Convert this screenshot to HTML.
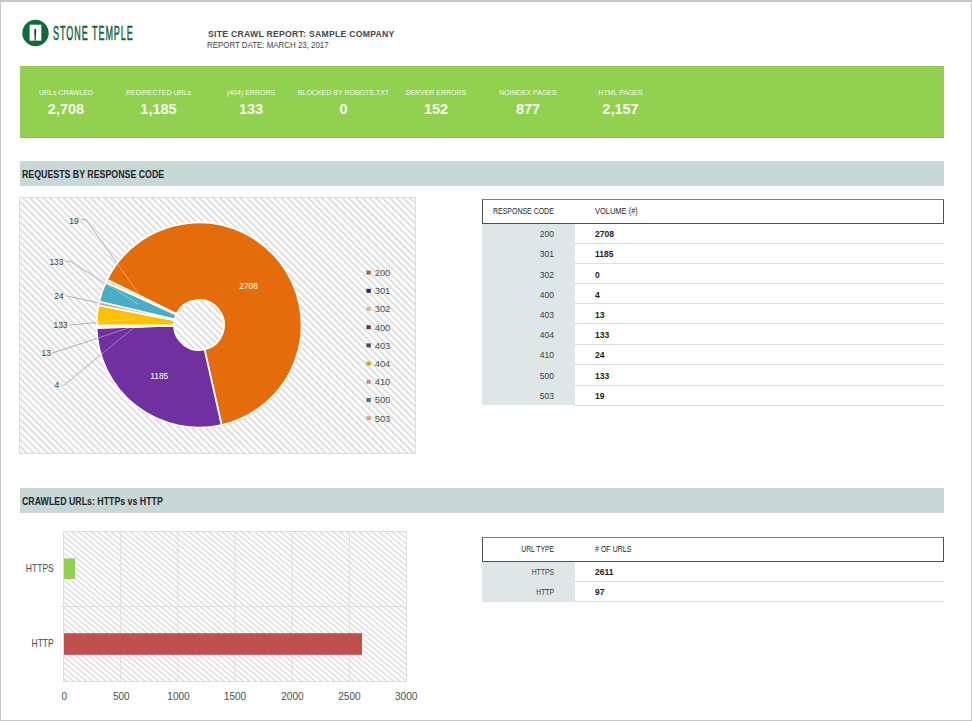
<!DOCTYPE html>
<html><head><meta charset="utf-8">
<style>
*{margin:0;padding:0;box-sizing:border-box}
html,body{width:972px;height:721px;overflow:hidden;background:#fff;font-family:"Liberation Sans",sans-serif}
.abs{position:absolute;white-space:nowrap}
#frame{position:absolute;left:0;top:0;width:972px;height:721px;border-top:2px solid #c6c6c6;border-left:1px solid #c6c6c6;border-right:1px solid #c6c6c6;border-bottom:1px solid #c6c6c6}
.kpi{position:absolute;width:120px;text-align:center;color:#f4fbec}
.kpi .l{font-size:7px;line-height:8px;position:absolute;top:0.5px;left:0;width:120px}
.kpi .v{font-size:14.5px;font-weight:bold;line-height:16px;position:absolute;top:12.8px;left:0;width:120px}
.sec{position:absolute;left:20px;width:924px;height:25px;background:#c8d8d7}
.sec span{position:absolute;left:2px;font-size:10px;font-weight:bold;color:#1e2528;top:9px;line-height:10px;white-space:nowrap;transform-origin:0 0;transform:scaleX(0.88)}
.tb{position:absolute;left:482px;width:462px}
.tbh{position:absolute;left:0;top:0;width:462px;height:25px;border:1.4px solid #505050;border-top-color:#808080;background:#fff}
.cell{position:absolute;font-size:8.5px;color:#3a3a3a;line-height:10px}
.gcol{position:absolute;left:0;width:92.7px;background:#dfe6e8}
.cell.sx{transform-origin:0 0;white-space:nowrap;color:#262626}
.cell.b{font-weight:bold;color:#222}
.rl{position:absolute;left:92px;width:370px;height:1px;background:#dedede}
</style></head><body>
<div id="frame"></div>

<!-- logo -->
<svg class="abs" style="left:0;top:0" width="160" height="60">
  <circle cx="35.5" cy="33" r="13.2" fill="#0d6a3b"/>
  <rect x="29.6" y="24.7" width="11.7" height="16" fill="#fff"/>
  <path d="M34.7 40.7 L34.2 30 Q35.2 27.6 36.2 30 L35.7 40.7 Z" fill="#1d3b2c"/>
</svg>
<div class="abs" id="logotext" style="left:53.3px;top:21.8px;font-size:21px;line-height:21px;color:#17603a;-webkit-text-stroke:0.6px #17603a;transform-origin:0 0;transform:scaleX(0.43);letter-spacing:2.2px">STONE TEMPLE</div>

<div class="abs" style="left:208px;top:28.1px;font-size:9.6px;font-weight:bold;color:#454545;line-height:11px;letter-spacing:0.3px;transform-origin:0 0;transform:scaleX(0.9)">SITE CRAWL REPORT: SAMPLE COMPANY</div>
<div class="abs" style="left:207px;top:40.2px;font-size:9px;color:#444;line-height:10px;transform-origin:0 0;transform:scaleX(0.878)">REPORT DATE: MARCH 23, 2017</div>

<!-- KPI band -->
<div class="abs" style="left:20px;top:65.5px;width:924px;height:72px;background:#92d050;border-top:1px solid #8ccb4c;border-bottom:1px solid #8dbf58"></div>
<div class="kpi" style="left:6px;top:88px"><div class="l">URLs CRAWLED</div><div class="v">2,708</div></div>
<div class="kpi" style="left:98.5px;top:88px"><div class="l">REDIRECTED URLs</div><div class="v">1,185</div></div>
<div class="kpi" style="left:191px;top:88px"><div class="l">(404) ERRORS</div><div class="v">133</div></div>
<div class="kpi" style="left:283.5px;top:88px"><div class="l">BLOCKED BY ROBOTS.TXT</div><div class="v">0</div></div>
<div class="kpi" style="left:376px;top:88px"><div class="l">SERVER ERRORS</div><div class="v">152</div></div>
<div class="kpi" style="left:468px;top:88px"><div class="l">NOINDEX PAGES</div><div class="v">877</div></div>
<div class="kpi" style="left:560.5px;top:88px"><div class="l">HTML PAGES</div><div class="v">2,157</div></div>

<!-- section 1 -->
<div class="sec" style="top:161px"><span>REQUESTS BY RESPONSE CODE</span></div>

<!-- pie chart -->
<svg class="abs" style="left:0;top:0" width="430" height="470">
  <defs>
    <pattern id="stripe" patternUnits="userSpaceOnUse" width="4.8" height="4.8" patternTransform="rotate(-45)">
      <rect width="4.8" height="4.8" fill="#fff"/>
      <rect width="2.2" height="4.8" fill="#e0e0e0"/>
    </pattern>
  </defs>
  <rect x="19.5" y="197.5" width="396" height="256" fill="url(#stripe)" stroke="#dcdcdc" stroke-width="1"/>
  <g stroke="#fff" stroke-width="1.7" stroke-linejoin="round">
    <path fill="#e46c0a" d="M107.03 279.75 A102.5 102.5 0 1 1 221.59 424.98 L204.51 349.39 A25.0 25.0 0 1 0 176.57 313.96 Z"/>
    <path fill="#7030a0" d="M221.59 424.98 A102.5 102.5 0 0 1 96.54 327.89 L174.01 325.71 A25.0 25.0 0 0 0 204.51 349.39 Z"/>
    <path fill="#f2ecec" d="M96.54 327.89 A102.5 102.5 0 0 1 96.53 327.28 L174.01 325.56 A25.0 25.0 0 0 0 174.01 325.71 Z"/>
    <path fill="#eeeaf2" d="M96.53 327.28 A102.5 102.5 0 0 1 96.50 325.30 L174.00 325.07 A25.0 25.0 0 0 0 174.01 325.56 Z"/>
    <path fill="#ffc000" d="M96.50 325.30 A102.5 102.5 0 0 1 98.45 305.12 L174.47 320.15 A25.0 25.0 0 0 0 174.00 325.07 Z"/>
    <path fill="#c0806e" d="M98.45 305.12 A102.5 102.5 0 0 1 99.22 301.54 L174.66 319.28 A25.0 25.0 0 0 0 174.47 320.15 Z"/>
    <path fill="#4bacc6" d="M99.22 301.54 A102.5 102.5 0 0 1 105.79 282.37 L176.27 314.60 A25.0 25.0 0 0 0 174.66 319.28 Z"/>
    <path fill="#f9b97f" d="M105.79 282.37 A102.5 102.5 0 0 1 107.03 279.75 L176.57 313.96 A25.0 25.0 0 0 0 176.27 314.60 Z"/>
  </g>
  <g stroke="#a0a0a0" stroke-width="0.8" fill="none">
    <polyline points="80.8,219.7 86.3,219.7 116.8,263.0"/>
    <polyline points="66.2,261.4 70.4,261.4 104.9,283.1"/>
    <polyline points="66.7,295.8 98.4,302.9"/>
    <polyline points="70.0,325.0 96.0,322.6"/>
    <polyline points="51.7,353.3 96.9,338.4"/>
    <polyline points="63.3,385.8 100.5,355.1"/>
  </g>
  <g stroke="#ffffff" stroke-opacity="0.45" stroke-width="0.8" fill="none">
    <line x1="116.8" y1="263.0" x2="141.2" y2="297.6"/>
    <line x1="104.9" y1="283.1" x2="138.5" y2="304.3"/>
    <line x1="98.4" y1="302.9" x2="136.4" y2="311.5"/>
    <line x1="96.0" y1="322.6" x2="135.3" y2="318.9"/>
    <line x1="96.9" y1="338.4" x2="135.0" y2="325.8"/>
    <line x1="100.5" y1="355.1" x2="135.0" y2="326.6"/>
  </g>
  <g font-family="Liberation Sans" font-size="8.4" fill="#3c3c3c">
    <text x="78.7" y="224" text-anchor="end">19</text>
    <text x="63.4" y="265.2" text-anchor="end">133</text>
    <text x="63.7" y="299.2" text-anchor="end">24</text>
    <text x="67.5" y="328.3" text-anchor="end">133</text>
    <text x="50.8" y="355.8" text-anchor="end">13</text>
    <text x="59.2" y="388" text-anchor="end">4</text>
  </g>
  <g font-family="Liberation Sans" font-size="8.4" fill="#fff" text-anchor="middle">
    <text x="248.6" y="288.5">2708</text>
    <text x="159.2" y="379.2">1185</text>
  </g>
  <g>
    <rect x="366.4" y="270.6" width="4.4" height="4" fill="#b06432"/>
    <rect x="366.4" y="288.8" width="4.4" height="4" fill="#3c1f64"/>
    <rect x="366.4" y="307.0" width="4.4" height="4" fill="#d9b98c"/>
    <rect x="366.4" y="325.2" width="4.4" height="4" fill="#7a3242"/>
    <rect x="366.4" y="343.4" width="4.4" height="4" fill="#4a4868"/>
    <rect x="366.4" y="361.6" width="4.4" height="4" fill="#d2a81e"/>
    <rect x="366.4" y="379.8" width="4.4" height="4" fill="#c29098"/>
    <rect x="366.4" y="398.0" width="4.4" height="4" fill="#3c7a8a"/>
    <rect x="366.4" y="416.2" width="4.4" height="4" fill="#daa878"/>
  </g>
  <g font-family="Liberation Sans" font-size="9.4" fill="#505050">
    <text x="374.7" y="276">200</text>
    <text x="374.7" y="294.2">301</text>
    <text x="374.7" y="312.4">302</text>
    <text x="374.7" y="330.6">400</text>
    <text x="374.7" y="348.8">403</text>
    <text x="374.7" y="367">404</text>
    <text x="374.7" y="385.2">410</text>
    <text x="374.7" y="403.4">500</text>
    <text x="374.7" y="421.6">503</text>
  </g>
</svg>

<!-- table 1 -->
<div class="tb" style="top:198.5px;height:210px">
  <div class="gcol" style="top:24.5px;height:181.5px"></div>
  <div class="tbh"></div>
  <div class="cell sx" style="left:11px;top:7.7px;transform:scaleX(0.82)">RESPONSE CODE</div>
  <div class="cell sx" style="left:113px;top:7.7px;transform:scaleX(0.88)">VOLUME (#)</div>
</div>
<div class="abs cell" style="left:492px;width:62px;text-align:right;top:229.2px">200</div>
<div class="abs cell b" style="left:595px;top:229.2px">2708</div>
<div class="abs rl" style="left:574px;top:242.6px"></div>
<div class="abs cell" style="left:492px;width:62px;text-align:right;top:249.3px">301</div>
<div class="abs cell b" style="left:595px;top:249.3px">1185</div>
<div class="abs rl" style="left:574px;top:262.8px"></div>
<div class="abs cell" style="left:492px;width:62px;text-align:right;top:269.5px">302</div>
<div class="abs cell b" style="left:595px;top:269.5px">0</div>
<div class="abs rl" style="left:574px;top:282.9px"></div>
<div class="abs cell" style="left:492px;width:62px;text-align:right;top:289.6px">400</div>
<div class="abs cell b" style="left:595px;top:289.6px">4</div>
<div class="abs rl" style="left:574px;top:303.1px"></div>
<div class="abs cell" style="left:492px;width:62px;text-align:right;top:309.8px">403</div>
<div class="abs cell b" style="left:595px;top:309.8px">13</div>
<div class="abs rl" style="left:574px;top:323.3px"></div>
<div class="abs cell" style="left:492px;width:62px;text-align:right;top:330.0px">404</div>
<div class="abs cell b" style="left:595px;top:330.0px">133</div>
<div class="abs rl" style="left:574px;top:343.6px"></div>
<div class="abs cell" style="left:492px;width:62px;text-align:right;top:350.3px">410</div>
<div class="abs cell b" style="left:595px;top:350.3px">24</div>
<div class="abs rl" style="left:574px;top:364.0px"></div>
<div class="abs cell" style="left:492px;width:62px;text-align:right;top:370.7px">500</div>
<div class="abs cell b" style="left:595px;top:370.7px">133</div>
<div class="abs rl" style="left:574px;top:384.5px"></div>
<div class="abs cell" style="left:492px;width:62px;text-align:right;top:391.2px">503</div>
<div class="abs cell b" style="left:595px;top:391.2px">19</div>
<div class="abs rl" style="left:574px;top:404.5px"></div>

<!-- section 2 -->
<div class="sec" style="top:488px"><span>CRAWLED URLs: HTTPs vs HTTP</span></div>

<!-- bar chart -->
<svg class="abs" style="left:0;top:500px" width="430" height="221">
  <defs>
    <pattern id="stripe2" patternUnits="userSpaceOnUse" width="4.2" height="4.2" patternTransform="rotate(-50)">
      <rect width="4.2" height="4.2" fill="#fff"/>
      <rect width="1.3" height="4.2" fill="#d9d9d9"/>
    </pattern>
  </defs>
  <rect x="63.5" y="31.5" width="343" height="150" fill="url(#stripe2)"/>
  <g stroke="#dedede" stroke-width="1">
    <line x1="63.5" y1="31.5" x2="406.5" y2="31.5"/>
    <line x1="63.5" y1="181.5" x2="406.5" y2="181.5"/>
    <line x1="63.5" y1="31.5" x2="63.5" y2="181.5"/>
    <line x1="120.7" y1="31.5" x2="120.7" y2="181.5"/>
    <line x1="177.8" y1="31.5" x2="177.8" y2="181.5"/>
    <line x1="235" y1="31.5" x2="235" y2="181.5"/>
    <line x1="292.1" y1="31.5" x2="292.1" y2="181.5"/>
    <line x1="349.3" y1="31.5" x2="349.3" y2="181.5"/>
    <line x1="406.5" y1="31.5" x2="406.5" y2="181.5"/>
    <line x1="60.5" y1="106.5" x2="406.5" y2="106.5"/>
  </g>
  <rect x="64" y="58.4" width="11" height="20.6" fill="#92d050"/>
  <rect x="64" y="133.2" width="298" height="21.6" fill="#c0504d"/>
  <g font-family="Liberation Sans" font-size="10.2" fill="#4a4a4a">
    <text transform="translate(53.8,72.2) scale(0.84,1)" text-anchor="end">HTTPS</text>
    <text transform="translate(53.8,147.1) scale(0.84,1)" text-anchor="end">HTTP</text>
  </g>
  <g font-family="Liberation Sans" font-size="10.1" fill="#505050" text-anchor="middle">
    <text x="64.2" y="199.7">0</text>
    <text x="121.3" y="199.7">500</text>
    <text x="178.5" y="199.7">1000</text>
    <text x="235" y="199.7">1500</text>
    <text x="292.4" y="199.7">2000</text>
    <text x="349.4" y="199.7">2500</text>
    <text x="406.2" y="199.7">3000</text>
  </g>
</svg>

<!-- table 2 -->
<div class="tb" style="top:536.6px;height:70px">
  <div class="gcol" style="top:24.5px;height:40.5px"></div>
  <div class="tbh"></div>
  <div class="cell sx" style="right:390px;top:7.7px;transform-origin:100% 0;transform:scaleX(0.8)">URL TYPE</div>
  <div class="cell sx" style="left:113px;top:7.7px;transform:scaleX(0.83)"># OF URLS</div>
</div>
<div class="abs cell" style="left:492px;width:62px;text-align:right;top:567.2px;transform-origin:100% 0;transform:scaleX(0.8)">HTTPS</div>
<div class="abs cell b" style="left:595px;top:567.2px">2611</div>
<div class="abs rl" style="left:574px;top:580.7px"></div>
<div class="abs cell" style="left:492px;width:62px;text-align:right;top:587.4px;transform-origin:100% 0;transform:scaleX(0.8)">HTTP</div>
<div class="abs cell b" style="left:595px;top:587.4px">97</div>
<div class="abs rl" style="left:574px;top:600.9px"></div>
</body></html>
